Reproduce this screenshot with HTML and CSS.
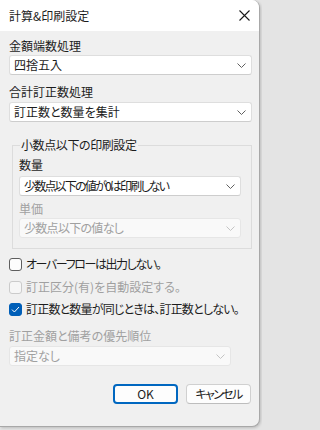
FILE: index.html
```html
<!DOCTYPE html>
<html lang="ja">
<head>
<meta charset="utf-8">
<link rel="stylesheet" href="styles.css">
</head>
<body>
<div class="window">
  <div class="titlebar">
    <span class="title">計算&amp;印刷設定</span>
    <svg class="close" width="11" height="11" viewBox="0 0 11 11"><path d="M0.5 0.5 L10.5 10.5 M10.5 0.5 L0.5 10.5" stroke="#1a1a1a" stroke-width="1.1" fill="none"/></svg>
  </div>
  <div class="content">
    <div class="label l1">金額端数処理</div>
    <div class="select s-top1">
      <span>四捨五入</span>
      <svg class="chev" width="9" height="5" viewBox="0 0 9 5"><path d="M0.5 0.5 L4.5 4.5 L8.5 0.5" stroke="#606060" fill="none"/></svg>
    </div>
    <div class="label l2">合計訂正数処理</div>
    <div class="select s-top2">
      <span>訂正数と数量を集計</span>
      <svg class="chev" width="9" height="5" viewBox="0 0 9 5"><path d="M0.5 0.5 L4.5 4.5 L8.5 0.5" stroke="#606060" fill="none"/></svg>
    </div>
    <fieldset class="group">
      <legend>小数点以下の印刷設定</legend>
      <div class="label l3">数量</div>
      <div class="select s-top3">
        <span class="tight2">少数点以下の値が0は印刷しない</span>
        <svg class="chev" width="9" height="5" viewBox="0 0 9 5"><path d="M0.5 0.5 L4.5 4.5 L8.5 0.5" stroke="#606060" fill="none"/></svg>
      </div>
      <div class="label disabled l4">単価</div>
      <div class="select disabled s-top4">
        <span class="tight1">少数点以下の値なし</span>
        <svg class="chev" width="9" height="5" viewBox="0 0 9 5"><path d="M0.5 0.5 L4.5 4.5 L8.5 0.5" stroke="#c4c4c4" fill="none"/></svg>
      </div>
    </fieldset>
    <div class="check c1"><span class="box"></span><span class="tight15">オーバーフローは出力しない。</span></div>
    <div class="check disabled c2"><span class="box"></span><span>訂正区分(有)を自動設定する。</span></div>
    <div class="check c3"><span class="box checked"><svg width="9" height="7" viewBox="0 0 9 7"><path d="M1 3.6 L3.4 6 L8 1" stroke="#ffffff" stroke-width="1" fill="none"/></svg></span><span class="tight08">訂正数と数量が同じときは、訂正数としない。</span></div>
    <div class="label disabled l5">訂正金額と備考の優先順位</div>
    <div class="select disabled narrow s-top5">
      <span>指定なし</span>
      <svg class="chev" width="9" height="5" viewBox="0 0 9 5"><path d="M0.5 0.5 L4.5 4.5 L8.5 0.5" stroke="#c4c4c4" fill="none"/></svg>
    </div>
    <div class="buttons">
      <div class="btn primary">OK</div>
      <div class="btn"><span class="tight18">キャンセル</span></div>
    </div>
  </div>
</div>
</body>
</html>
```

FILE: styles.css
```css
html, body {
  margin: 0;
  padding: 0;
}
html {
  background: #e4e4e4;
}
body {
  width: 262px;
  height: 430px;
  overflow: hidden;
  font-family: "Noto Sans CJK JP", "Noto Sans", sans-serif;
  font-size: 12px;
  color: #1c1c1c;
  font-feature-settings: "palt";
}
.window {
  width: 259px;
  height: 426px;
  background: #f0f0f0;
  border-right: 1px solid #a8a8a8;
  border-bottom: 1px solid #a8a8a8;
  border-radius: 0 8px 8px 0;
  overflow: hidden;
  box-shadow: 1px 1px 3px rgba(0,0,0,0.18);
}
.titlebar {
  height: 31px;
  background: #ffffff;
  display: flex;
  align-items: center;
  justify-content: space-between;
  padding: 0 9px 0 9px;
}
.title {
  font-size: 12px;
  line-height: 16px;
  margin-top: 1px;
}
.content {
  padding: 0 7px 0 9px;
  display: flex;
  flex-direction: column;
}
.label {
  line-height: 16px;
  height: 16px;
  white-space: nowrap;
}
.disabled {
  color: #a0a0a0;
}
.l1 { margin-top: 7px; }
.l2 { margin-top: 9px; }
.l3 { margin-top: 4px; }
.l4 { margin-top: 5px; }
.l5 { margin-top: 11px; }
.select {
  box-sizing: border-box;
  height: 20px;
  background: #ffffff;
  border: 1px solid #dedede;
  border-bottom-color: #cdcdcd;
  border-radius: 3px;
  display: flex;
  align-items: center;
  justify-content: space-between;
  padding: 0 5px 0 4px;
  line-height: 16px;
  white-space: nowrap;
}
.select.disabled {
  background: #f9f9f9;
  border-color: #e6e6e6;
}
.s-top1 { margin-top: 1px; }
.s-top2 { margin-top: 2px; }
.s-top3 { margin-top: 3px; }
.s-top4 { margin-top: 1px; }
.s-top5 { margin-top: 2px; }
.narrow {
  width: 222px;
}
.chev {
  flex: none;
  margin-top: 1px;
}
.tight2 { letter-spacing: -1.8px; }
.tight1 { letter-spacing: -0.7px; }
.tight15 { letter-spacing: -1.4px; }
.tight08 { letter-spacing: -0.8px; }
.tight18 { letter-spacing: -1.6px; }
.group {
  margin: 15px 0 0 3px;
  padding: 0 10px 10px 6px;
  border: 1px solid #dcdcdc;
  border-radius: 0;
  min-width: 0;
  display: flex;
  flex-direction: column;
}
.group legend {
  padding: 0 1px;
  margin-left: 1px;
  line-height: 16px;
  letter-spacing: -0.4px;
}
.check {
  display: flex;
  align-items: center;
  gap: 4px;
  height: 16px;
  line-height: 16px;
  white-space: nowrap;
}
.c1 { margin-top: 7px; }
.c2 { margin-top: 7px; }
.c3 { margin-top: 6px; }
.box {
  box-sizing: border-box;
  width: 13px;
  height: 13px;
  border: 1px solid #5e5e5e;
  border-radius: 3px;
  background: #fdfdfd;
  flex: none;
  display: flex;
  align-items: center;
  justify-content: center;
}
.check.disabled .box {
  border-color: #cbcbcb;
  background: #f6f6f6;
}
.box.checked {
  background: #005fb8;
  border-color: #005fb8;
}
.buttons {
  display: flex;
  justify-content: flex-end;
  gap: 8px;
  margin-top: 18px;
  padding-right: 1px;
}
.btn {
  box-sizing: border-box;
  width: 65px;
  height: 20px;
  background: #fdfdfd;
  border: 1px solid #d0d0d0;
  border-bottom-color: #bdbdbd;
  border-radius: 4px;
  display: flex;
  align-items: center;
  justify-content: center;
  line-height: 16px;
}
.btn.primary {
  border: 2px solid #0067c0;
  border-radius: 4px;
}
```
